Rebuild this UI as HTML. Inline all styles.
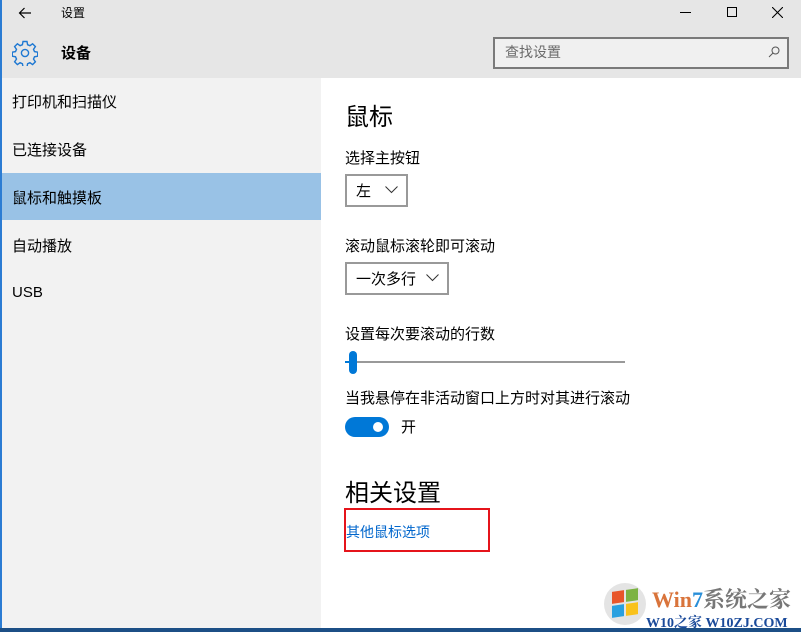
<!DOCTYPE html>
<html><head><meta charset="utf-8"><style>
*{margin:0;padding:0;box-sizing:border-box}
body{width:801px;height:632px;overflow:hidden;background:#fff;font-family:"Liberation Sans","Noto Sans CJK SC",sans-serif;position:relative;color:#000}
.a{position:absolute}
.t{font-size:15px;white-space:nowrap;margin-top:-2px}
</style></head><body>
<div class="a" style="left:0;top:0;width:801px;height:78px;background:#e6e6e6"></div>
<div class="a" style="left:0;top:0;width:2px;height:632px;background:#2b7cd3"></div>
<div class="a" style="left:2px;top:78px;width:319px;height:550px;background:#f2f2f2"></div>
<div class="a" style="left:0;top:628px;width:801px;height:4px;background:#1c4f86"></div>
<svg class="a" style="left:18px;top:6px" width="14" height="14" viewBox="0 0 14 14"><path d="M13 7H1.5M6.5 2L1.5 7l5 5" stroke="#000" fill="none" stroke-width="1.2"/></svg>
<div class="a" style="left:61px;top:4px;font-size:12px">设置</div>
<div class="a" style="left:680px;top:12px;width:11px;height:1px;background:#000"></div>
<div class="a" style="left:727px;top:7px;width:10px;height:10px;border:1px solid #000"></div>
<svg class="a" style="left:772px;top:7px" width="11" height="11"><path d="M0 0L11 11M11 0L0 11" stroke="#000" stroke-width="1.1"/></svg>
<svg class="a" style="left:12px;top:40px" width="26" height="26" viewBox="0 0 26 26"><path d="M11 1.5h4l.6 3.2 2.3 1 2.7-1.9 2.8 2.8-1.9 2.7 1 2.3 3.2.6v4l-3.2.6-1 2.3 1.9 2.7-2.8 2.8-2.7-1.9-2.3 1-.6 3.2h-4l-.6-3.2-2.3-1-2.7 1.9-2.8-2.8 1.9-2.7-1-2.3-3.2-.6v-4l3.2-.6 1-2.3-1.9-2.7 2.8-2.8 2.7 1.9 2.3-1z" fill="none" stroke="#1e78d2" stroke-width="1.4"/><circle cx="13" cy="13" r="3.6" fill="none" stroke="#1e78d2" stroke-width="1.4"/></svg>
<div class="a" style="left:61px;top:42px;font-size:15px;font-weight:bold">设备</div>
<div class="a" style="left:493px;top:37px;width:296px;height:32px;border:2px solid #7a7a7a;background:#f0f0f0"></div>
<div class="a" style="left:505px;top:42px;font-size:14px;color:#6a6a6a">查找设置</div>
<svg class="a" style="left:768px;top:46px" width="12" height="12"><circle cx="7.5" cy="4.5" r="3.5" fill="none" stroke="#555" stroke-width="1"/><path d="M5 7L1 11" stroke="#555"/></svg>
<div class="a t" style="left:12px;top:93px">打印机和扫描仪</div>
<div class="a t" style="left:12px;top:141px">已连接设备</div>
<div class="a" style="left:2px;top:173px;width:319px;height:47px;background:#99c2e6"></div>
<div class="a t" style="left:12px;top:189px">鼠标和触摸板</div>
<div class="a t" style="left:12px;top:237px">自动播放</div>
<div class="a t" style="left:12px;top:286px">USB</div>
<div class="a" style="left:345px;top:97px;font-size:24px">鼠标</div>
<div class="a t" style="left:345px;top:149px">选择主按钮</div>
<div class="a" style="left:345px;top:174px;width:63px;height:33px;border:2px solid #999"></div>
<div class="a t" style="left:356px;top:182px">左</div>
<svg class="a" style="left:385px;top:186px" width="13" height="8"><path d="M.5.5l6 6 6-6" stroke="#333" fill="none"/></svg>
<div class="a t" style="left:345px;top:237px">滚动鼠标滚轮即可滚动</div>
<div class="a" style="left:345px;top:262px;width:104px;height:33px;border:2px solid #999"></div>
<div class="a t" style="left:356px;top:270px">一次多行</div>
<svg class="a" style="left:426px;top:274px" width="13" height="8"><path d="M.5.5l6 6 6-6" stroke="#333" fill="none"/></svg>
<div class="a t" style="left:345px;top:325px">设置每次要滚动的行数</div>
<div class="a" style="left:345px;top:361px;width:280px;height:2px;background:#999"></div>
<div class="a" style="left:345px;top:361px;width:8px;height:2px;background:#0078d7"></div>
<div class="a" style="left:349px;top:351px;width:8px;height:23px;border-radius:4px;background:#0078d7"></div>
<div class="a t" style="left:345px;top:389px">当我悬停在非活动窗口上方时对其进行滚动</div>
<div class="a" style="left:345px;top:417px;width:44px;height:20px;border-radius:10px;background:#0078d7"></div>
<div class="a" style="left:373px;top:422px;width:10px;height:10px;border-radius:5px;background:#fff"></div>
<div class="a t" style="left:401px;top:418px">开</div>
<div class="a" style="left:345px;top:473px;font-size:24px">相关设置</div>
<div class="a" style="left:344px;top:508px;width:146px;height:44px;border:2px solid #e5141b"></div>
<div class="a" style="left:346px;top:522px;font-size:14px;color:#0066cc">其他鼠标选项</div>
<div class="a" style="left:604px;top:583px;width:42px;height:42px;border-radius:21px;background:#e4e4e4"></div>
<div class="a" style="left:612px;top:591px;width:12px;height:12px;background:#e8562a;transform:skewY(-8deg)"></div>
<div class="a" style="left:626px;top:589px;width:12px;height:12px;background:#7cb342;transform:skewY(-8deg)"></div>
<div class="a" style="left:612px;top:605px;width:12px;height:12px;background:#29a0e0;transform:skewY(-8deg)"></div>
<div class="a" style="left:626px;top:603px;width:12px;height:12px;background:#f9c21c;transform:skewY(-8deg)"></div>
<div class="a" style="left:652px;top:583px;font-size:22px;font-weight:bold;font-family:'Liberation Serif','Noto Serif CJK SC',serif;color:#d9743b;white-space:nowrap">Win<span style="color:#2a8fd8">7</span><span style="color:#777">系统之家</span></div>
<div class="a" style="left:646px;top:612px;font-size:14px;font-weight:bold;font-family:'Liberation Serif','Noto Serif CJK SC',serif;color:#1a4a9a;white-space:nowrap">W10之家 W10ZJ.COM</div>
</body></html>
